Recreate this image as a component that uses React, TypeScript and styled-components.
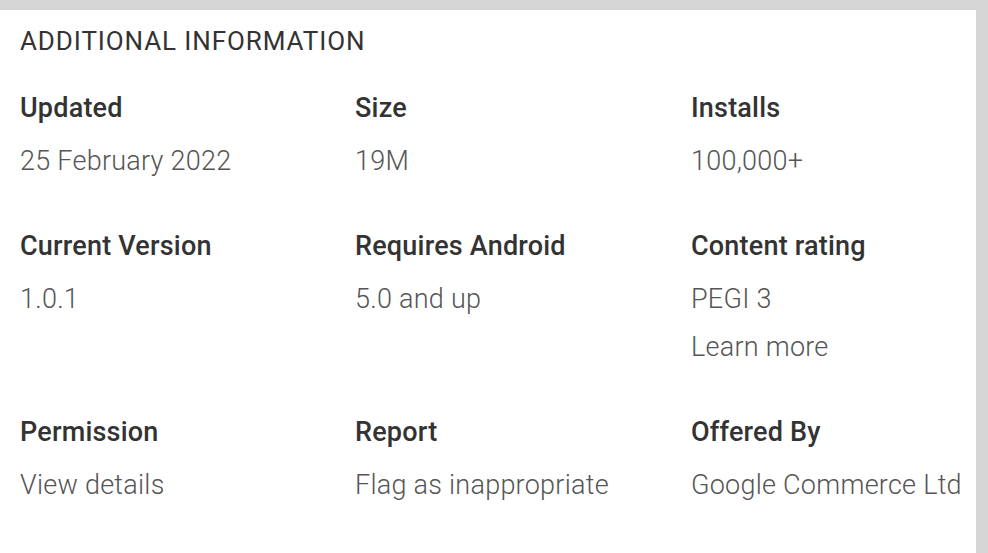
import React from "react";
import styled, { createGlobalStyle } from "styled-components";

const Global = createGlobalStyle`
  html, body {
    margin: 0;
    padding: 0;
    background: #d5d5d5;
    width: 988px;
    height: 553px;
    overflow: hidden;
  }
  #root {
    height: 553px;
  }
`;

const Page = styled.div`
  height: 553px;
  padding-top: 10px;
  box-sizing: border-box;
  display: flex;
`;

const Card = styled.section`
  width: 976px;
  flex: 0 0 auto;
  background: #ffffff;
  padding: 7px 0 0 20px;
  box-sizing: border-box;
  font-family: Roboto, "Liberation Sans", sans-serif;
`;

const Heading = styled.h2`
  margin: 0;
  font-size: 26px;
  font-weight: 400;
  line-height: 48px;
  color: #333333;
  letter-spacing: 0.9px;
`;

const Grid = styled.div`
  margin-top: 19px;
  display: grid;
  grid-template-columns: 335px 336px 1fr;
  row-gap: 37px;
`;

const Item = styled.div`
  display: flex;
  flex-direction: column;
`;

const Label = styled.div`
  font-size: 27px;
  font-weight: 500;
  line-height: 48px;
  color: #333333;
  letter-spacing: 0.2px;
`;

const Value = styled.div<{ $first?: boolean }>`
  font-size: 27px;
  font-weight: 300;
  line-height: 48px;
  color: #555555;
  letter-spacing: 0.25px;
  margin-top: ${(p) => (p.$first ? "5px" : "0")};
`;

const items: { label: string; values: string[] }[] = [
  { label: "Updated", values: ["25 February 2022"] },
  { label: "Size", values: ["19M"] },
  { label: "Installs", values: ["100,000+"] },
  { label: "Current Version", values: ["1.0.1"] },
  { label: "Requires Android", values: ["5.0 and up"] },
  { label: "Content rating", values: ["PEGI 3", "Learn more"] },
  { label: "Permission", values: ["View details"] },
  { label: "Report", values: ["Flag as inappropriate"] },
  { label: "Offered By", values: ["Google Commerce Ltd"] },
];

export default function App() {
  return (
    <>
      <Global />
      <Page>
        <Card>
          <Heading>ADDITIONAL INFORMATION</Heading>
          <Grid>
            {items.map((it) => (
              <Item key={it.label}>
                <Label>{it.label}</Label>
                {it.values.map((v, i) => (
                  <Value key={v} $first={i === 0}>
                    {v}
                  </Value>
                ))}
              </Item>
            ))}
          </Grid>
        </Card>
      </Page>
    </>
  );
}
